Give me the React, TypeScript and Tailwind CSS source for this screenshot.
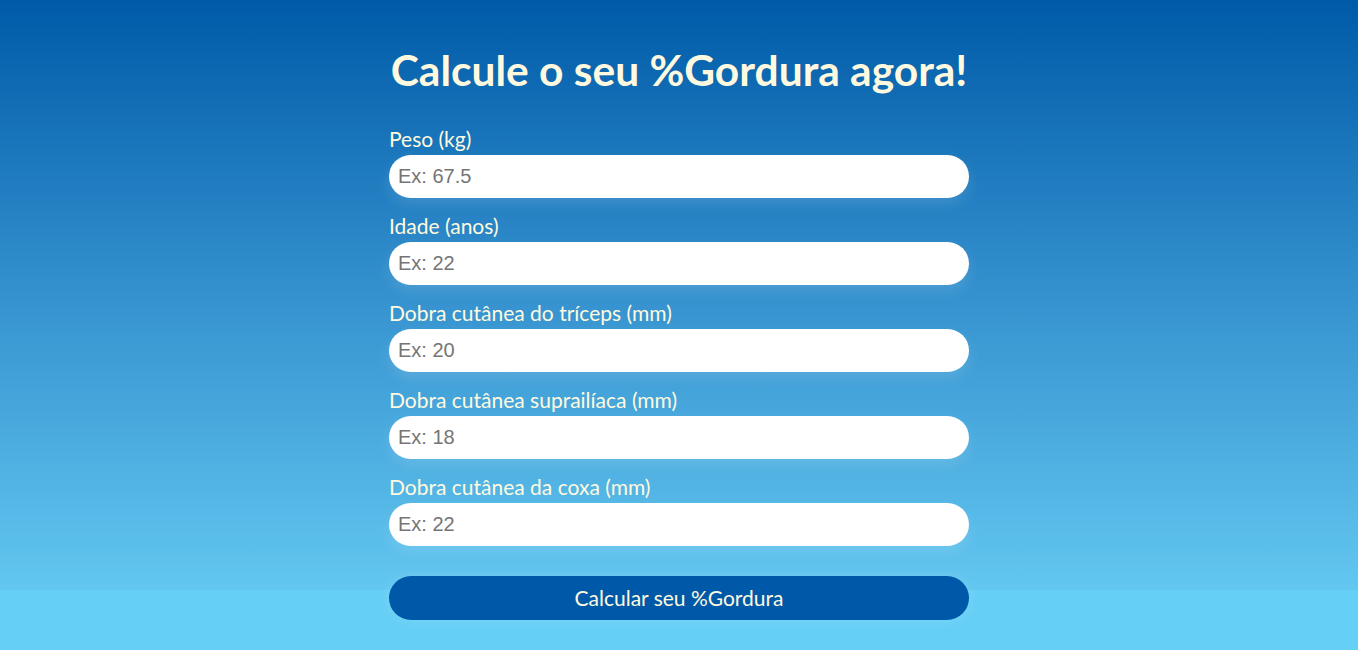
const fields = [
  { label: "Peso (kg)", placeholder: "Ex: 67.5" },
  { label: "Idade (anos)", placeholder: "Ex: 22" },
  { label: "Dobra cutânea do tríceps (mm)", placeholder: "Ex: 20" },
  { label: "Dobra cutânea suprailíaca (mm)", placeholder: "Ex: 18" },
  { label: "Dobra cutânea da coxa (mm)", placeholder: "Ex: 22" },
];

export default function App() {
  return (
    <div className="min-h-screen bg-[#66cff6] bg-[linear-gradient(to_bottom,#005aa8_0%,#3a97d2_55%,#62c7f0_100%)] bg-no-repeat bg-[length:100%_590px] font-['Lato','Noto_Sans',sans-serif]">
      <div className="mx-auto w-[580px] pt-[44px]">
        <h1 className="-mx-4 whitespace-nowrap text-center text-[42.5px] font-bold leading-[52px] text-[#fffadf]">
          Calcule o seu %Gordura agora!
        </h1>
        <form className="mt-[29px] flex flex-col" onSubmit={(e) => e.preventDefault()}>
          {fields.map((f) => (
            <div key={f.label} className="mb-[14px] flex flex-col">
              <label className="mb-[3px] text-[21px] leading-[27px] text-[#fffadf]">{f.label}</label>
              <input
                type="text"
                placeholder={f.placeholder}
                className="h-[43px] w-full rounded-full bg-white px-[9px] font-['Liberation_Sans',Arial,sans-serif] text-[20px] text-[#333] shadow-[0_6px_14px_rgba(255,255,255,0.12)] outline-none placeholder:text-[#757575]"
              />
            </div>
          ))}
          <button
            type="submit"
            className="mt-[16px] h-[44px] w-full rounded-full bg-[#0059a8] text-[21px] text-[#fffadf] shadow-[0_0_12px_rgba(255,255,255,0.15)]"
          >
            Calcular seu %Gordura
          </button>
        </form>
      </div>
    </div>
  );
}
